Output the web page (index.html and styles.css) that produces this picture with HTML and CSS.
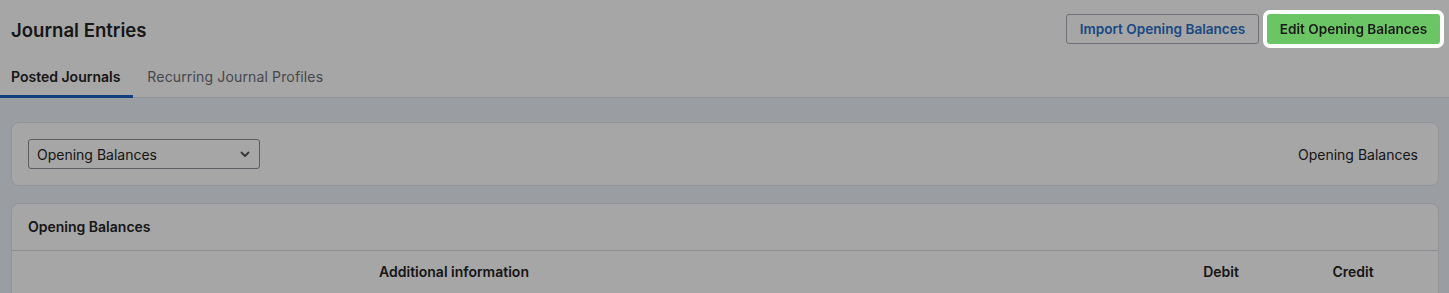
FILE: index.html
```html
<!DOCTYPE html>
<html lang="en">
<head>
    <meta charset="UTF-8">
    <meta name="viewport" content="width=device-width, initial-scale=1.0">
    <title>Journal Entries</title>
    <link rel="stylesheet" href="styles.css">
</head>
<body>
    <div class="page-header">
        <div class="title-row">
            <h1>Journal Entries</h1>
            <div class="header-buttons">
                <button class="btn btn-outline">Import Opening Balances</button>
                <button class="btn btn-green">Edit Opening Balances</button>
            </div>
        </div>
        <div class="tabs">
            <div class="tab active">Posted Journals</div>
            <div class="tab">Recurring Journal Profiles</div>
        </div>
    </div>

    <div class="content">
        <!-- Filter card -->
        <div class="card filter-card">
            <div class="select">
                <span>Opening Balances</span>
                <svg width="10" height="7" viewBox="0 0 10 7"><path d="M1.5 1.5 L5 5 L8.5 1.5" fill="none" stroke="#555" stroke-width="1.8" stroke-linecap="round" stroke-linejoin="round"/></svg>
            </div>
            <div class="filter-label">Opening Balances</div>
        </div>

        <!-- Entries card -->
        <div class="card entries-card">
            <div class="card-title">Opening Balances</div>
            <div class="table-head">
                <div class="col-info">Additional information</div>
                <div class="col-num">Debit</div>
                <div class="col-num">Credit</div>
            </div>
        </div>
    </div>

    <!-- Tour overlay -->
    <div class="overlay"></div>
</body>
</html>
```

FILE: styles.css
```css
body {
    margin: 0;
    font-family: Inter, "Noto Sans", sans-serif;
    background-color: #edf1f7;
    color: #242424;
    height: 293px;
    overflow: hidden;
}

/* Header */
.page-header {
    background-color: #fff;
    border-bottom: 1px solid #dcdfe3;
}

.title-row {
    display: flex;
    align-items: center;
    justify-content: space-between;
    padding: 14px 9px 0 11px;
    height: 30px;
}

.title-row h1 {
    font-size: 18.6px;
    font-weight: 600;
    margin: 0;
    padding-top: 2px;
}

.header-buttons {
    display: flex;
    gap: 8px;
}

.btn {
    font-family: inherit;
    font-size: 13.6px;
    font-weight: 600;
    height: 30px;
    padding: 0;
    border-radius: 3px;
    cursor: pointer;
}

.btn-outline {
    background-color: #fff;
    color: #2a6fc9;
    border: 1px solid #a9afb8;
    width: 193px;
}

.btn-green {
    position: relative;
    z-index: 20;
    background-color: #6cc564;
    color: #1a1a1a;
    border: none;
    width: 173px;
    box-shadow: 0 0 0 4px #fff;
}

.tabs {
    display: flex;
    margin-top: 17px;
}

.tab {
    font-size: 14px;
    padding: 7px 13px 10px 11px;
    color: #6b6f75;
    border-bottom: 3px solid transparent;
    margin-bottom: -1px;
}

.tab + .tab {
    padding-left: 14px;
    letter-spacing: 0.15px;
}

.tab.active {
    color: #242424;
    font-weight: 600;
    border-bottom-color: #1761c4;
}

/* Content */
.content {
    padding: 24px 10px 0 11px;
    display: flex;
    flex-direction: column;
    gap: 17px;
}

.card {
    background-color: #fff;
    border: 1px solid #e1e4e8;
    border-radius: 8px;
}

.filter-card {
    display: flex;
    align-items: center;
    justify-content: space-between;
    padding: 16px 20px 16px 16px;
}

.select {
    width: 213px;
    height: 28px;
    border: 1px solid #8c9097;
    border-radius: 3px;
    display: flex;
    align-items: center;
    justify-content: space-between;
    padding: 0 9px 0 8px;
    font-size: 14px;
}

.filter-label {
    font-size: 14px;
}

.entries-card {
    height: 120px;
}

.card-title {
    font-size: 14px;
    font-weight: 600;
    padding: 14px 16px;
    height: 18px;
    border-bottom: 1px solid #d8dbe0;
}

.table-head {
    display: flex;
    font-size: 14px;
    font-weight: 600;
    padding: 12px 0 0 0;
}

.col-info {
    width: 884px;
    text-align: center;
}

.col-num {
    width: 132px;
    text-align: center;
}

.col-info + .col-num {
    margin-left: 259px;
}

/* Overlay */
.overlay {
    position: fixed;
    top: 0;
    left: 0;
    width: 100%;
    height: 100%;
    background-color: rgba(0, 0, 0, 0.35);
    z-index: 10;
}
```
